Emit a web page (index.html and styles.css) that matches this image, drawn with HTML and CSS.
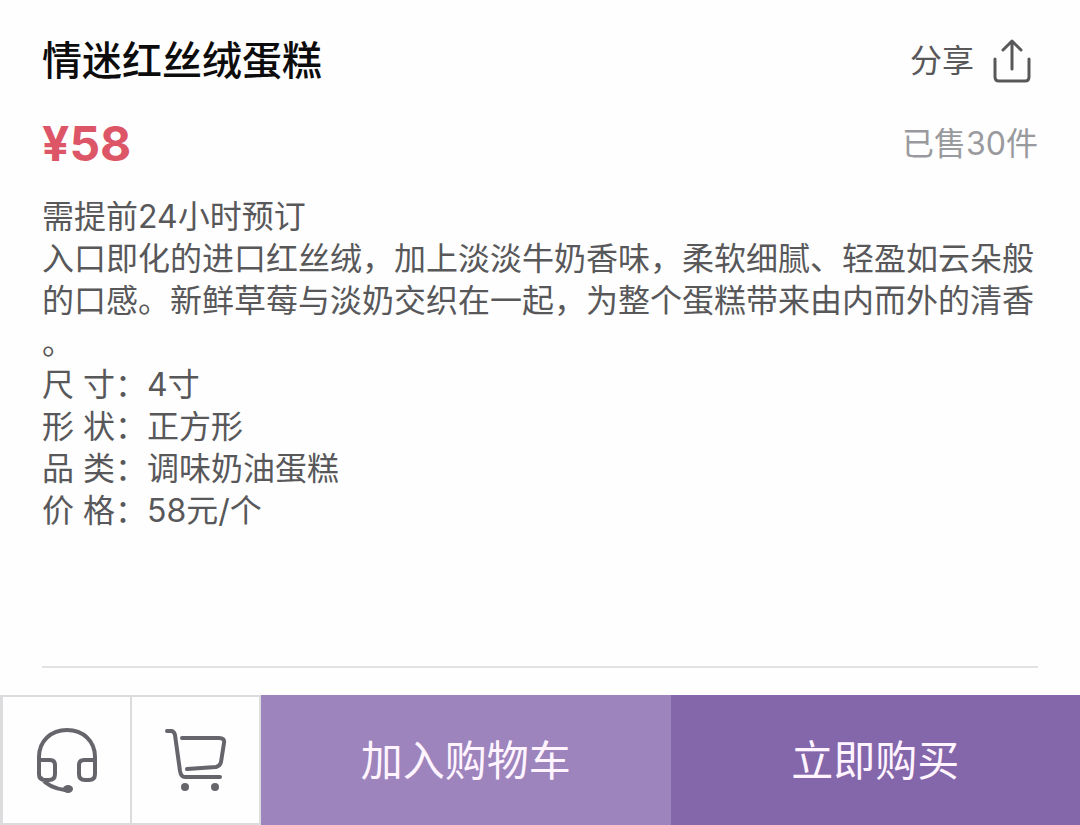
FILE: index.html
```html
<!DOCTYPE html>
<html lang="zh-CN">
<head>
<meta charset="utf-8">
<meta name="viewport" content="width=device-width, initial-scale=1">
<title>情迷红丝绒蛋糕</title>
<link rel="stylesheet" href="styles.css">
</head>
<body>
<main class="product">
  <header class="row title-row">
    <h1 class="title">情迷红丝绒蛋糕</h1>
    <button class="share" type="button">
      <span>分享</span>
      <svg class="share-icon" viewBox="0 0 40 46" aria-hidden="true">
        <path d="M3 21v18q0 4 4 4h26q4 0 4-4V21M20 31V3M11 12l9-9 9 9"/>
      </svg>
    </button>
  </header>
  <div class="row price-row">
    <strong class="price">¥58</strong>
    <span class="sold">已售30件</span>
  </div>
  <section class="description">
    <p>需提前24小时预订</p>
    <p>入口即化的进口红丝绒，加上淡淡牛奶香味，柔软细腻、轻盈如云朵般的口感。新鲜草莓与淡奶交织在一起，为整个蛋糕带来由内而外的清香。</p>
    <p>尺 寸：4寸</p>
    <p>形 状：正方形</p>
    <p>品 类：调味奶油蛋糕</p>
    <p>价 格：58元/个</p>
  </section>
</main>
<footer class="actions">
  <div class="shortcuts">
    <button class="shortcut" type="button" aria-label="客服">
      <svg class="icon" viewBox="0 0 64 68" aria-hidden="true">
        <path d="M4 31C4 15 16 4 32 4S60 15 60 31V48Q60 54 54 54H50Q44 54 44 48V39Q44 34 49 34H60M4 31V48Q4 54 10 54H14Q20 54 20 48V39Q20 34 15 34H4M6 52Q14 62 30 64"/>
        <ellipse class="solid" cx="33" cy="63" rx="5" ry="4"/>
      </svg>
    </button>
    <button class="shortcut" type="button" aria-label="购物车">
      <svg class="icon" viewBox="0 0 64 68" aria-hidden="true">
        <path d="M3 5H7Q10 5 11 9L16 45Q17 51 21 51H56M18 12H55Q61 12 60 17L57 36Q56 40 52 41L23 43"/>
        <circle class="solid" cx="21" cy="61" r="4"/>
        <circle class="solid" cx="51" cy="61" r="4"/>
      </svg>
    </button>
  </div>
  <button class="action add" type="button">加入购物车</button>
  <button class="action buy" type="button">立即购买</button>
</footer>
</body>
</html>
```
FILE: styles.css
```css
* {
  box-sizing: border-box;
}

body {
  display: flex;
  flex-direction: column;
  min-height: 100vh;
  margin: 0;
  background: #fefefe;
  color: #58585a;
  font-family: Inter, "Noto Sans CJK SC", sans-serif;
  font-size: 32px;
  line-height: 42px;
}

button {
  padding: 0;
  border: 0;
  background: none;
  color: inherit;
  font: inherit;
  cursor: pointer;
}

.product {
  flex: 1;
  margin: 0 42px 27px;
  padding-top: 36px;
  border-bottom: 2px solid #e2e2e2;
}

.row {
  display: flex;
  align-items: center;
  justify-content: space-between;
}

.title-row {
  height: 50px;
}

.title {
  margin: 0;
  color: #0c0c0c;
  font-size: 40px;
  font-weight: 500;
}

.share {
  display: flex;
  align-items: center;
  gap: 18px;
  padding-right: 6px;
}

.share-icon {
  width: 40px;
  height: 46px;
  fill: none;
  stroke: #58585a;
  stroke-width: 3;
  stroke-linecap: round;
  stroke-linejoin: round;
}

.price-row {
  height: 60px;
  margin-top: 28px;
}

.price {
  color: #dd5668;
  font-size: 48px;
  font-weight: 700;
}

.sold {
  color: #999a9d;
}

.description {
  padding-top: 22px;
  line-break: anywhere;
}

.description p {
  margin: 0;
}

.actions {
  display: grid;
  grid-template-columns: 261px 1fr 1fr;
  min-height: 130px;
}

.shortcuts {
  display: grid;
  grid-template-columns: 1fr 1fr;
  gap: 2px;
  padding: 2px 2px 2px 3px;
  background: #dcdcde;
}

.shortcut {
  display: flex;
  align-items: center;
  justify-content: center;
  background: #fefefe;
}

.icon {
  width: 64px;
  height: 68px;
  fill: none;
  stroke: #66656c;
  stroke-width: 4;
  stroke-linecap: round;
  stroke-linejoin: round;
}

.solid {
  fill: #66656c;
  stroke: none;
}

.action {
  padding-top: 2px;
  color: #fff4ff;
  font-size: 42px;
}

.add {
  background: #9d84bc;
}

.buy {
  background: #8467aa;
}
```
